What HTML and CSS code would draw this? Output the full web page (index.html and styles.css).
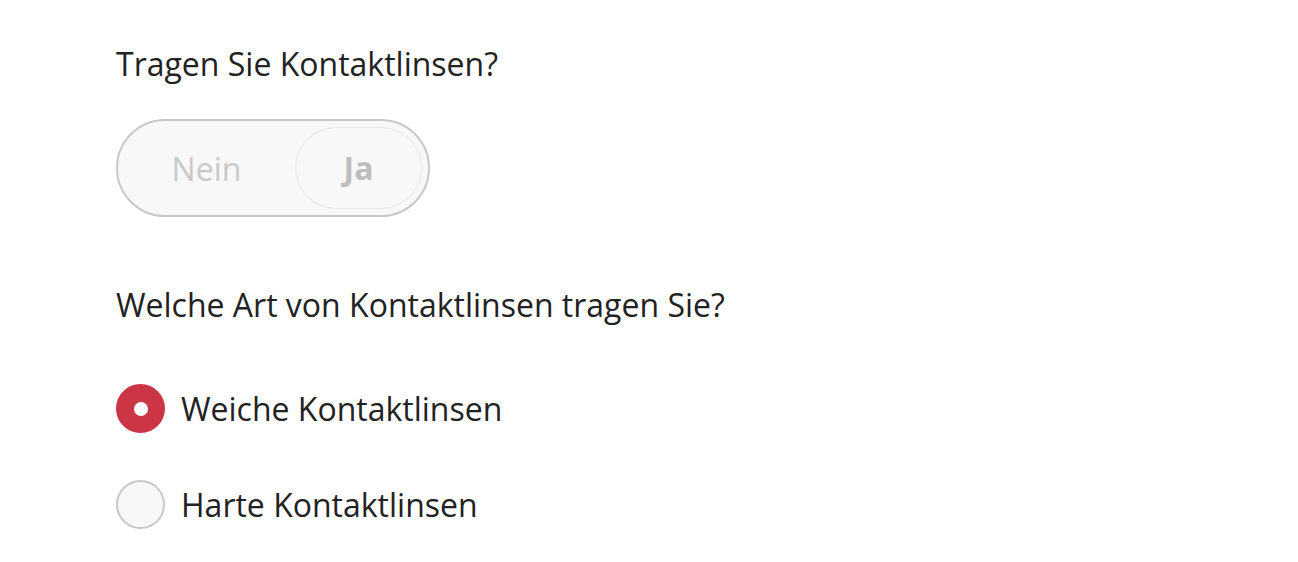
FILE: index.html
```html
<!DOCTYPE html>
<html lang="de">
<head>
  <meta charset="UTF-8" />
  <title>Kontaktlinsen</title>
  <link rel="stylesheet" href="styles.css">
</head>
<body>
  <div class="form">
    <div class="question">Tragen Sie Kontaktlinsen?</div>
    <div class="toggle">
      <div class="option">Nein</div>
      <div class="option active">Ja</div>
    </div>

    <div class="question second">Welche Art von Kontaktlinsen tragen Sie?</div>
    <div class="radios">
      <label class="radio">
        <span class="dot checked"></span>
        <span class="label">Weiche Kontaktlinsen</span>
      </label>
      <label class="radio">
        <span class="dot"></span>
        <span class="label">Harte Kontaktlinsen</span>
      </label>
    </div>
  </div>
</body>
</html>
```

FILE: styles.css
```css
* { margin: 0; padding: 0; box-sizing: border-box; }
body {
  font-family: 'Open Sans', sans-serif;
  background: #fff;
  color: #222;
}
.form {
  padding: 42px 0 0 116px;
}
.question {
  font-size: 32px;
  line-height: 44px;
}
.question.second {
  margin-top: 66px;
}
.toggle {
  margin-top: 33px;
  width: 314px;
  height: 98px;
  border: 2px solid #c8c8c8;
  border-radius: 49px;
  background: #f8f8f8;
  display: flex;
  align-items: center;
  padding: 0 6px 0 0;
}
.option {
  flex: 1;
  text-align: center;
  font-size: 32px;
  color: #c9c9c9;
}
.option.active {
  flex: 0 0 127px;
  height: 82px;
  line-height: 80px;
  border: 1px solid #e6e6e6;
  border-radius: 41px;
  font-weight: 700;
  color: #bdbdbd;
}
.radios {
  margin-top: 57px;
  display: flex;
  flex-direction: column;
  gap: 47px;
}
.radio {
  display: flex;
  align-items: center;
  gap: 16px;
  font-size: 32px;
}
.dot {
  width: 49px;
  height: 49px;
  border-radius: 50%;
  border: 2px solid #c8c8c8;
  background: #f8f8f8;
  display: flex;
  align-items: center;
  justify-content: center;
}
.dot.checked {
  border-color: #cc3545;
  background: #cc3545;
}
.dot.checked::after {
  content: "";
  width: 14px;
  height: 14px;
  border-radius: 50%;
  background: #fff;
}
```
